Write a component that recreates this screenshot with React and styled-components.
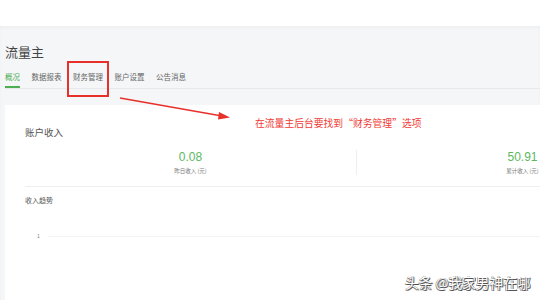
import styled, { createGlobalStyle } from "styled-components";

const GlobalStyle = createGlobalStyle`
  html, body {
    margin: 0;
    padding: 0;
    background: #ffffff;
  }
  body {
    font-family: "Noto Sans CJK SC", "Noto Sans", sans-serif;
    width: 540px;
    height: 300px;
    overflow: hidden;
  }
`

const Page = styled.div`
  position: relative;
  width: 540px;
  height: 300px;
  overflow: hidden;
`

const TopBar = styled.div`
  height: 26px;
  background: #ffffff;
`

const Main = styled.div`
  background: #f5f6f8;
  padding-left: 5px;
  height: 274px;
  box-shadow: inset 0 2px 3px rgba(0, 0, 0, 0.03);
`

const Header = styled.div`
  padding-top: 18px;
`

const Title = styled.h1`
  margin: 0;
  font-size: 13px;
  line-height: 16px;
  font-weight: 400;
  color: #444;
`

const Tabs = styled.div`
  display: flex;
  gap: 11.5px;
  margin-top: 10px;
  border-bottom: 1px solid #e8e9eb;
`

const Tab = styled.div`
  font-size: 7.5px;
  line-height: 14px;
  padding-bottom: 2px;
  color: ${(p) => (p.$active ? "#4dae52" : "#666")};
  border-bottom: 2px solid ${(p) => (p.$active ? "#4dae52" : "transparent")};
`

const Card = styled.div`
  margin-top: 16px;
  background: #ffffff;
  padding: 21px 0 0 20px;
  height: 200px;
`

const CardTitle = styled.div`
  font-size: 9.5px;
  line-height: 12px;
  color: #555;
`

const Stats = styled.div`
  display: flex;
  margin-top: 12px;
  padding-bottom: 11px;
  border-bottom: 1px solid #eeeff1;
`

const Stat = styled.div`
  flex: 0 0 331px;
  display: flex;
  flex-direction: column;
  align-items: center;
  border-left: ${(p) => (p.$divided ? "1px solid #eeeff1" : "none")};
`

const Value = styled.div`
  font-family: "Liberation Sans", Arial, sans-serif;
  font-size: 12px;
  line-height: 14px;
  color: #5cb85f;
`

const Label = styled.div`
  margin-top: 3px;
  font-size: 5.5px;
  line-height: 8px;
  color: #777;
  white-space: nowrap;
`

const SubTitle = styled.div`
  margin-top: 8px;
  font-size: 7px;
  line-height: 10px;
  color: #555;
`

const ChartRow = styled.div`
  display: flex;
  align-items: center;
  margin-top: 27px;
  padding-left: 12px;
`

const AxisLabel = styled.div`
  width: 11px;
  font-family: "Liberation Sans", Arial, sans-serif;
  font-size: 5px;
  line-height: 8px;
  color: #888;
`

const GridLine = styled.div`
  flex: 1;
  height: 1px;
  background: #f2f3f5;
`

const HighlightBox = styled.div`
  position: absolute;
  left: 67px;
  top: 61px;
  width: 38px;
  height: 32px;
  border-width: 2px;
  border-style: solid;
  border-color: rgb(232, 48, 42);
`

const Arrow = styled.svg`
  position: absolute;
  left: 0;
  top: 0;
  pointer-events: none;
`

const Note = styled.div`
  position: absolute;
  left: 255px;
  top: 116px;
  font-size: 9.8px;
  line-height: 14px;
  color: #f03a35;
  white-space: nowrap;
`

const Watermark = styled.div`
  position: absolute;
  left: 405px;
  top: 274px;
  font-size: 13.7px;
  line-height: 16px;
  color: #ffffff;
  white-space: nowrap;
  text-shadow: 1px 1px 0 #555, -0.5px -0.5px 0 #888, 0.5px -0.5px 0 #888, -0.5px 0.5px 0 #888;
`

const tabs = ["概况", "数据报表", "财务管理", "账户设置", "公告消息"];

export default function App() {
  return (
    <Page>
      <GlobalStyle />
      <TopBar />
      <Main>
        <Header>
          <Title>流量主</Title>
          <Tabs>
            {tabs.map((t, i) => (
              <Tab key={t} $active={i === 0}>
                {t}
              </Tab>
            ))}
          </Tabs>
        </Header>
        <Card>
          <CardTitle>账户收入</CardTitle>
          <Stats>
            <Stat>
              <Value>0.08</Value>
              <Label>昨日收入 (元)</Label>
            </Stat>
            <Stat $divided>
              <Value>50.91</Value>
              <Label>累计收入 (元)</Label>
            </Stat>
          </Stats>
          <SubTitle>收入趋势</SubTitle>
          <ChartRow>
            <AxisLabel>1</AxisLabel>
            <GridLine />
          </ChartRow>
        </Card>
      </Main>
      <HighlightBox />
      <Arrow width="540" height="300" viewBox="0 0 540 300">
        <line x1="120" y1="98" x2="222" y2="116" stroke="#e8302a" strokeWidth="1.6" />
        <polygon points="230,117.5 219,112 218,119.5" fill="#e8302a" />
      </Arrow>
      <Note>在流量主后台要找到“财务管理”选项</Note>
      <Watermark>头条 @我家男神在哪</Watermark>
    </Page>
  );
}
